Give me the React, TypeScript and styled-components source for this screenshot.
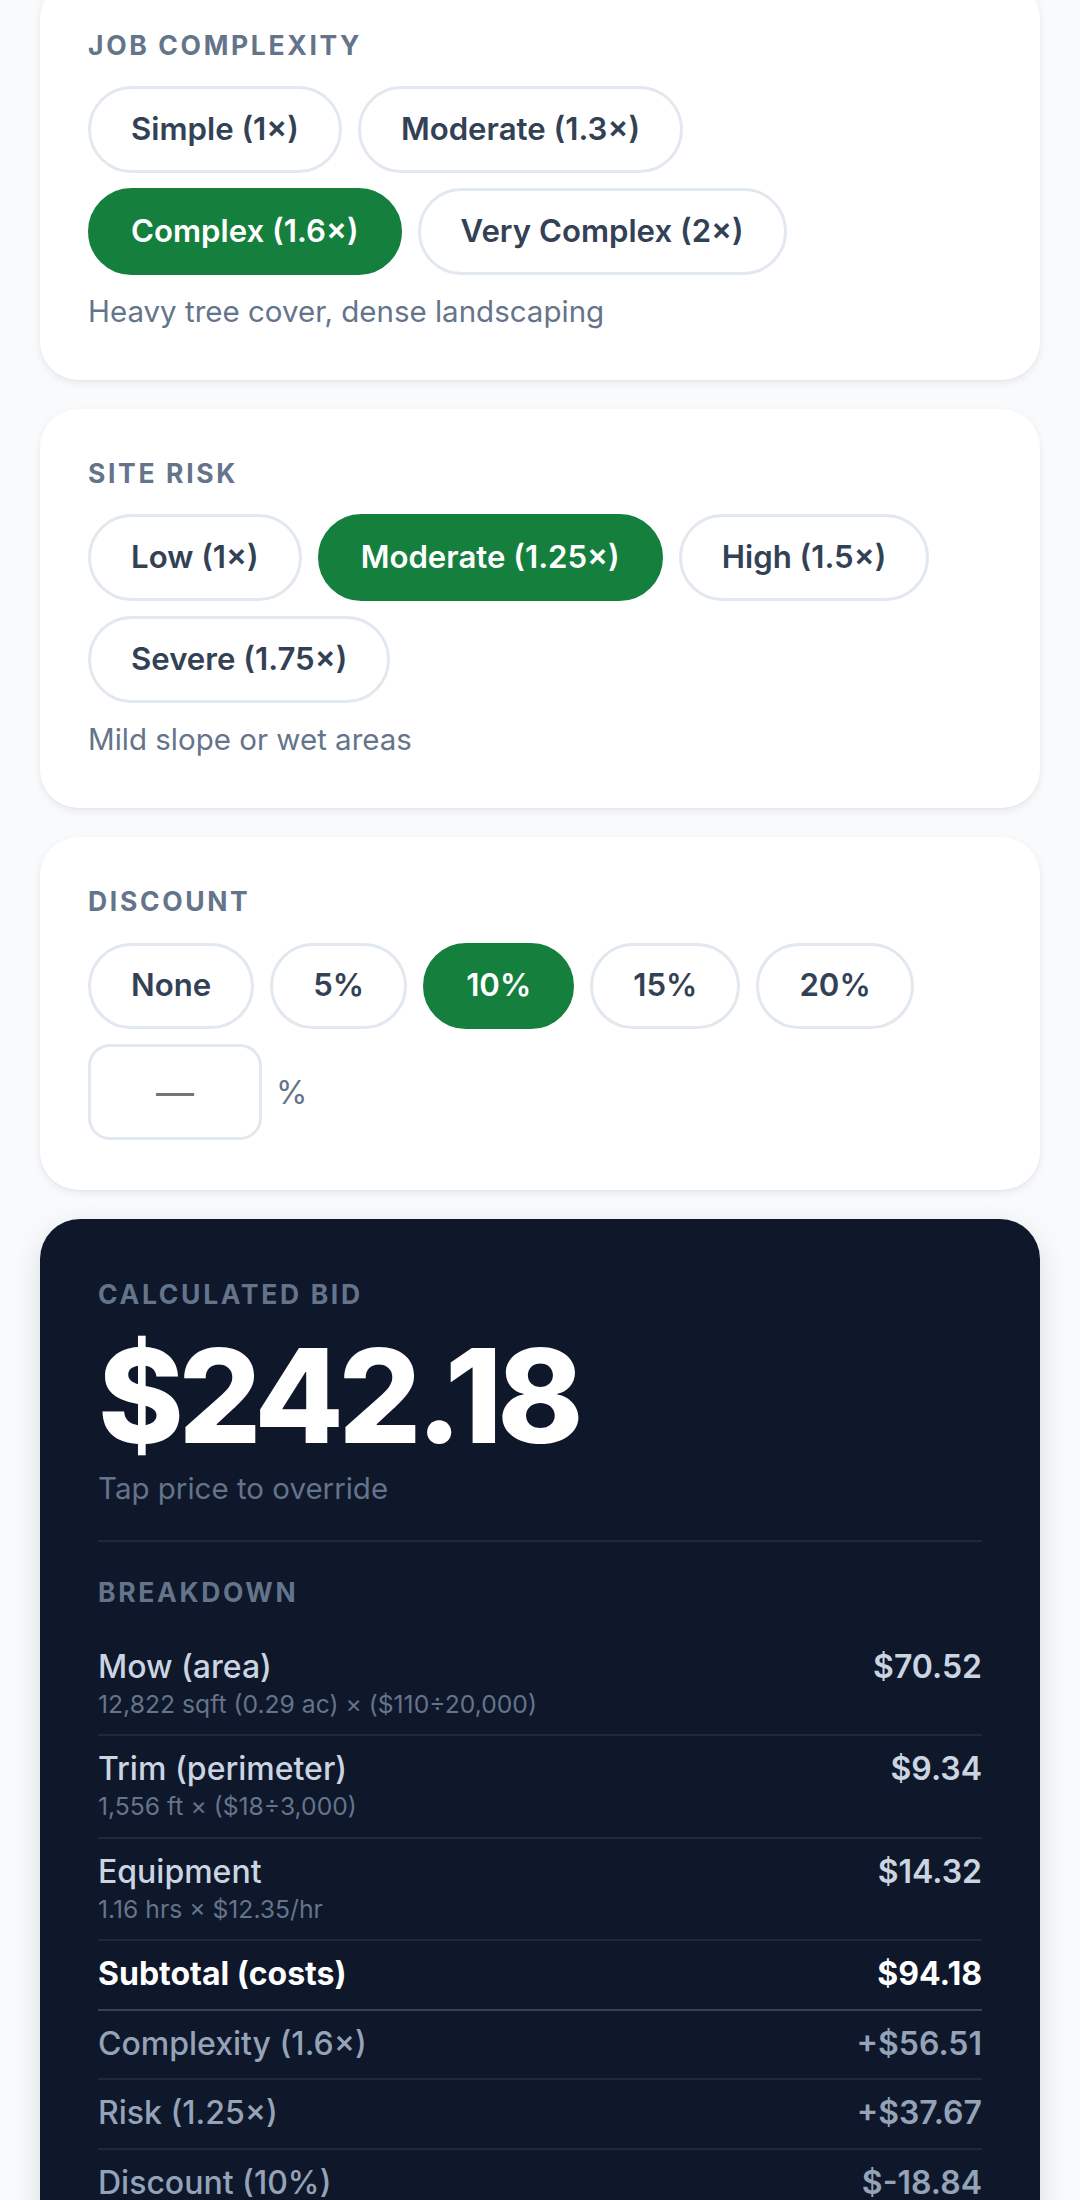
import React, { useState } from 'react';
import styled, { createGlobalStyle } from 'styled-components';

const complexityOptions = [
  { label: 'Simple (1×)', hint: 'Open lawn, few obstacles' },
  { label: 'Moderate (1.3×)', hint: 'Some beds and trees to work around' },
  { label: 'Complex (1.6×)', hint: 'Heavy tree cover, dense landscaping' },
  { label: 'Very Complex (2×)', hint: 'Tight spaces, many obstacles' },
];

const riskOptions = [
  { label: 'Low (1×)', hint: 'Flat, dry, easy access' },
  { label: 'Moderate (1.25×)', hint: 'Mild slope or wet areas' },
  { label: 'High (1.5×)', hint: 'Steep slopes or hazards' },
  { label: 'Severe (1.75×)', hint: 'Dangerous terrain' },
];

const discountOptions = ['None', '5%', '10%', '15%', '20%'];

type Line = {
  label: string;
  sub?: string;
  value: string;
  kind: 'cost' | 'subtotal' | 'adjust';
};

const breakdown: Line[] = [
  { label: 'Mow (area)', sub: '12,822 sqft (0.29 ac) × ($110÷20,000)', value: '$70.52', kind: 'cost' },
  { label: 'Trim (perimeter)', sub: '1,556 ft × ($18÷3,000)', value: '$9.34', kind: 'cost' },
  { label: 'Equipment', sub: '1.16 hrs × $12.35/hr', value: '$14.32', kind: 'cost' },
  { label: 'Subtotal (costs)', value: '$94.18', kind: 'subtotal' },
  { label: 'Complexity (1.6×)', value: '+$56.51', kind: 'adjust' },
  { label: 'Risk (1.25×)', value: '+$37.67', kind: 'adjust' },
  { label: 'Discount (10%)', value: '$-18.84', kind: 'adjust' },
  { label: 'Margin', value: '+$72.66', kind: 'adjust' },
];

export default function App() {
  const [complexity, setComplexity] = useState(2);
  const [risk, setRisk] = useState(1);
  const [discount, setDiscount] = useState(2);
  const [customDiscount, setCustomDiscount] = useState('');

  return (
    <>
      <GlobalStyle />
      <Page>
        <Card>
          <SectionLabel>Job Complexity</SectionLabel>
          <ChipRow>
            {complexityOptions.map((opt, i) => (
              <Chip key={opt.label} active={complexity === i} onClick={() => setComplexity(i)}>
                {opt.label}
              </Chip>
            ))}
          </ChipRow>
          <Hint>{complexityOptions[complexity].hint}</Hint>
        </Card>

        <Card>
          <SectionLabel>Site Risk</SectionLabel>
          <ChipRow>
            {riskOptions.map((opt, i) => (
              <Chip key={opt.label} active={risk === i} onClick={() => setRisk(i)}>
                {opt.label}
              </Chip>
            ))}
          </ChipRow>
          <Hint>{riskOptions[risk].hint}</Hint>
        </Card>

        <Card>
          <SectionLabel>Discount</SectionLabel>
          <ChipRow>
            {discountOptions.map((opt, i) => (
              <Chip key={opt} active={discount === i} onClick={() => setDiscount(i)}>
                {opt}
              </Chip>
            ))}
            <CustomDiscount>
              <PercentInput
                type="text"
                inputMode="decimal"
                placeholder="—"
                value={customDiscount}
                onChange={(e) => setCustomDiscount(e.target.value)}
              />
              <PercentSign>%</PercentSign>
            </CustomDiscount>
          </ChipRow>
        </Card>

        <BidCard>
          <BidLabel>Calculated Bid</BidLabel>
          <BidAmount>$242.18</BidAmount>
          <TapHint>Tap price to override</TapHint>

          <Breakdown>
            <BidLabel>Breakdown</BidLabel>
            <BreakdownList>
              {breakdown.map((line) => (
                <BreakdownRow key={line.label} kind={line.kind}>
                  <div>
                    <RowLabel kind={line.kind}>{line.label}</RowLabel>
                    {line.sub && <RowSub>{line.sub}</RowSub>}
                  </div>
                  <RowValue kind={line.kind}>{line.value}</RowValue>
                </BreakdownRow>
              ))}
            </BreakdownList>
          </Breakdown>
        </BidCard>
      </Page>
    </>
  );
}

const GlobalStyle = createGlobalStyle`
  body {
    margin: 0;
    background: #f8fafc;
    font-family: Inter, "Noto Sans", "Liberation Sans", sans-serif;
    -webkit-font-smoothing: antialiased;
  }
  * {
    box-sizing: border-box;
  }
`;

// the page is scrolled a little: the first card starts above the fold
const Page = styled.div`
  display: flex;
  flex-direction: column;
  gap: 29.5px;
  margin-top: -19px;
  padding: 0 40px 80px;
`;

const Card = styled.section`
  background: #ffffff;
  border-radius: 38px;
  padding: 47.5px 48px 47.5px;
  box-shadow: 0 3px 8px rgba(15, 23, 42, 0.07), 0 1px 2px rgba(15, 23, 42, 0.04);
`;

const SectionLabel = styled.div`
  font-size: 26.5px;
  line-height: 1.21;
  font-weight: 700;
  letter-spacing: 0.1em;
  text-transform: uppercase;
  color: #64748b;
  margin-bottom: 25.5px;
`;

const ChipRow = styled.div`
  display: flex;
  flex-wrap: wrap;
  gap: 15px 16px;
`;

const Chip = styled.button<{ active: boolean }>`
  font-family: inherit;
  font-size: 31.2px;
  line-height: 1.21;
  font-weight: 600;
  padding: 21.6px 40px;
  border-radius: 999px;
  border: 3px solid ${({ active }) => (active ? '#15803d' : '#e2e8f0')};
  background: ${({ active }) => (active ? '#15803d' : '#ffffff')};
  color: ${({ active }) => (active ? '#ffffff' : '#334155')};
  cursor: pointer;
`;

const Hint = styled.div`
  margin-top: 16px;
  font-size: 29.5px;
  line-height: 1.4;
  color: #64748b;
`;

const CustomDiscount = styled.div`
  display: flex;
  align-items: center;
  gap: 14px;
  margin-bottom: 2px;
`;

const PercentInput = styled.input`
  width: 174px;
  height: 96px;
  border: 3px solid #e2e8f0;
  border-radius: 22px;
  background: #ffffff;
  font-family: inherit;
  font-size: 38px;
  font-weight: 600;
  color: #334155;
  text-align: center;
  outline: none;

  &::placeholder {
    color: #757575;
    font-weight: 400;
  }
`;

const PercentSign = styled.span`
  font-size: 32px;
  color: #64748b;
`;

const BidCard = styled.section`
  background: #0f172a;
  border-radius: 40px;
  padding: 58.5px 58px;
  box-shadow: 0 10px 30px rgba(15, 23, 42, 0.12);
`;

const BidLabel = styled.div`
  font-size: 26.5px;
  line-height: 1.21;
  font-weight: 700;
  letter-spacing: 0.1em;
  text-transform: uppercase;
  color: #64748b;
`;

const BidAmount = styled.div`
  margin-top: 20.5px;
  font-size: 130px;
  line-height: 1;
  font-weight: 800;
  letter-spacing: -0.04em;
  color: #ffffff;
  cursor: pointer;
`;

const TapHint = styled.div`
  margin-top: 5.5px;
  font-size: 29.5px;
  line-height: 1.5;
  color: #64748b;
`;

const Breakdown = styled.div`
  margin-top: 30px;
  padding-top: 33.5px;
  border-top: 2px solid #1e293b;
`;

const BreakdownList = styled.div`
  margin-top: 25.5px;
`;

type Kind = Line['kind'];

const BreakdownRow = styled.div<{ kind: Kind }>`
  display: flex;
  justify-content: space-between;
  align-items: flex-start;
  padding: 14.4px 0;
  border-bottom: 2px solid ${({ kind }) => (kind === 'subtotal' ? '#334155' : '#1e293b')};
`;

const rowColor = (kind: Kind) =>
  kind === 'subtotal' ? '#ffffff' : kind === 'adjust' ? '#94a3b8' : '#cbd5e1';

const RowLabel = styled.div<{ kind: Kind }>`
  font-size: 32px;
  line-height: 1.21;
  font-weight: ${({ kind }) => (kind === 'subtotal' ? 700 : 500)};
  color: ${({ kind }) => rowColor(kind)};
`;

const RowSub = styled.div`
  margin-top: 3.2px;
  font-size: 24.7px;
  line-height: 1.21;
  color: #64748b;
`;

const RowValue = styled.div<{ kind: Kind }>`
  font-size: 32px;
  line-height: 1.21;
  font-weight: ${({ kind }) => (kind === 'subtotal' ? 700 : 600)};
  color: ${({ kind }) => rowColor(kind)};
  white-space: nowrap;
`;
